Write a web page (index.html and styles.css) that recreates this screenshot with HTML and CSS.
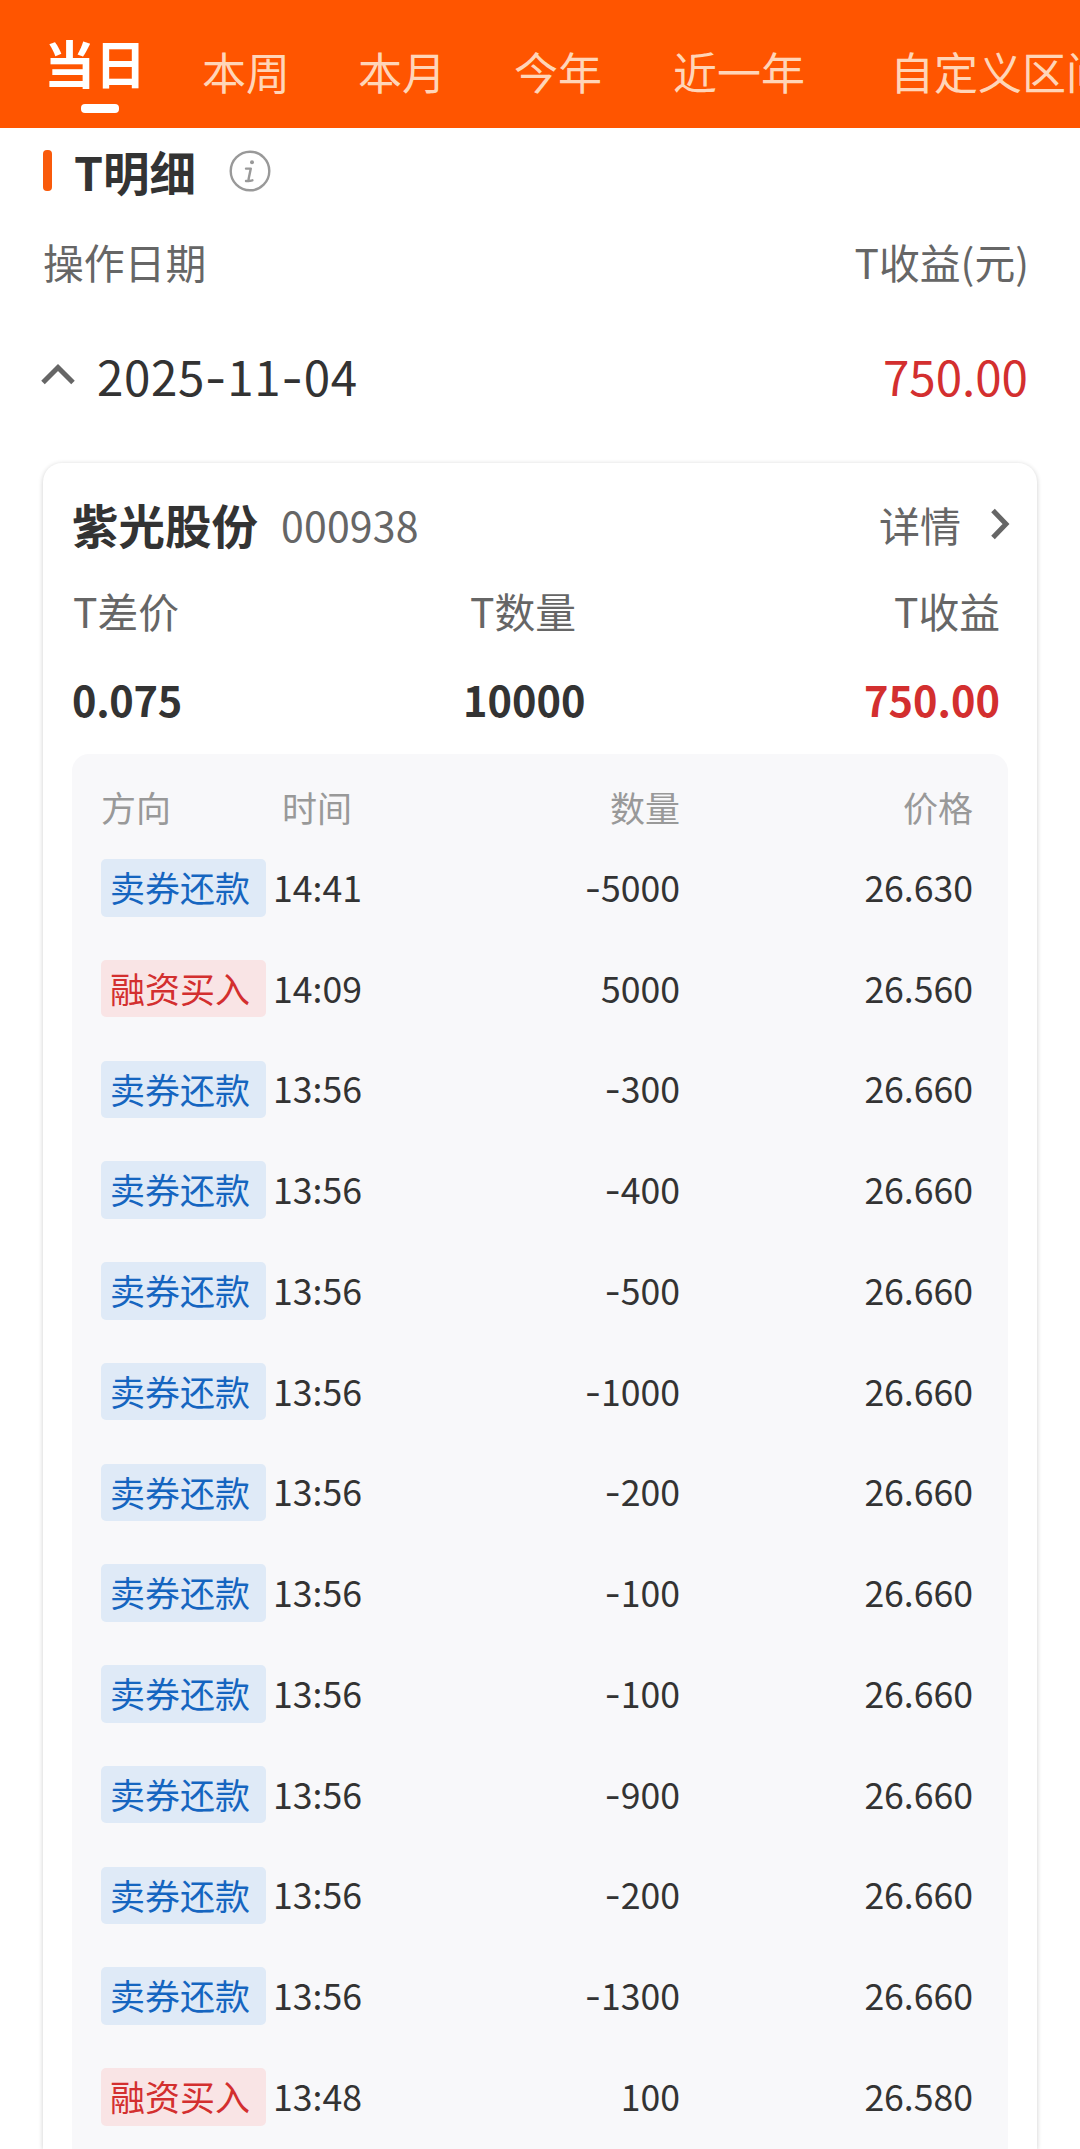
FILE: index.html
```html
<!DOCTYPE html>
<html lang="zh-CN">
<head>
<meta charset="utf-8">
<title>T明细</title>
<link rel="stylesheet" href="styles.css">
</head>
<body>
<div class="page">
  <nav class="tabs">
    <a class="tab active">当日</a>
    <a class="tab">本周</a>
    <a class="tab">本月</a>
    <a class="tab">今年</a>
    <a class="tab">近一年</a>
    <a class="tab">自定义区间</a>
  </nav>

  <header class="title">
    <span class="bar"></span>
    <h1>T明细</h1>
    <svg class="info" viewBox="0 0 42 42" fill="none" stroke="#999" stroke-width="2.4" stroke-linecap="round" stroke-linejoin="round">
      <circle cx="21" cy="21" r="19.3"/>
      <path d="M17 18.600h4.800l-2.200 10.400q-.4 2 1.600 1.800l2.200-.5M17 31h3" stroke-width="2.4"/>
      <circle cx="23" cy="12.300" r="2" fill="#999" stroke="none"/>
    </svg>
  </header>

  <div class="columns"><span>操作日期</span><span>T收益(元)</span></div>

  <div class="day">
    <svg class="up" viewBox="0 0 34 22" fill="none" stroke="#666" stroke-width="5"><path d="M2 19.500 17 4.500 32 19.500"/></svg>
    <span class="date">2025<i>-</i>11<i>-</i>04</span>
    <span class="profit">750.00</span>
  </div>

  <section class="card">
    <div class="stock">
      <h2>紫光股份</h2>
      <span class="code">000938</span>
      <a class="detail">详情</a>
      <svg class="right" viewBox="0 0 20 32" fill="none" stroke="#666" stroke-width="5"><path d="M3 2.500 16 16 3 29.500"/></svg>
    </div>
    <div class="summary labels"><span>T差价</span><span>T数量</span><span>T收益</span></div>
    <div class="summary values"><span>0.075</span><span>10000</span><span class="gain">750.00</span></div>

    <div class="trades">
      <div class="row head"><span>方向</span><span>时间</span><span>数量</span><span>价格</span></div>
      <div class="row"><b class="tag sell">卖券还款</b><span>14:41</span><span><i>-</i>5000</span><span>26.630</span></div>
      <div class="row"><b class="tag buy">融资买入</b><span>14:09</span><span>5000</span><span>26.560</span></div>
      <div class="row"><b class="tag sell">卖券还款</b><span>13:56</span><span><i>-</i>300</span><span>26.660</span></div>
      <div class="row"><b class="tag sell">卖券还款</b><span>13:56</span><span><i>-</i>400</span><span>26.660</span></div>
      <div class="row"><b class="tag sell">卖券还款</b><span>13:56</span><span><i>-</i>500</span><span>26.660</span></div>
      <div class="row"><b class="tag sell">卖券还款</b><span>13:56</span><span><i>-</i>1000</span><span>26.660</span></div>
      <div class="row"><b class="tag sell">卖券还款</b><span>13:56</span><span><i>-</i>200</span><span>26.660</span></div>
      <div class="row"><b class="tag sell">卖券还款</b><span>13:56</span><span><i>-</i>100</span><span>26.660</span></div>
      <div class="row"><b class="tag sell">卖券还款</b><span>13:56</span><span><i>-</i>100</span><span>26.660</span></div>
      <div class="row"><b class="tag sell">卖券还款</b><span>13:56</span><span><i>-</i>900</span><span>26.660</span></div>
      <div class="row"><b class="tag sell">卖券还款</b><span>13:56</span><span><i>-</i>200</span><span>26.660</span></div>
      <div class="row"><b class="tag sell">卖券还款</b><span>13:56</span><span><i>-</i>1300</span><span>26.660</span></div>
      <div class="row"><b class="tag buy">融资买入</b><span>13:48</span><span>100</span><span>26.580</span></div>
    </div>
  </section>
</div>
</body>
</html>
```
FILE: styles.css
```css
* { box-sizing: border-box; }

body {
  margin: 0;
  background: #fff;
  color: #333;
  font-family: "Noto Sans CJK SC", sans-serif;
}

h1, h2 { margin: 0; font-weight: 700; }

/* wider, raised hyphen for dates and signed numbers */
i { font-family: Inter, sans-serif; font-style: normal; line-height: 0; }

.page {
  display: flex;
  flex-direction: column;
  width: 1080px;
  height: 2149px;
  overflow: hidden;
}

.tabs {
  flex: none;
  display: grid;
  grid-template-columns: 158px 156px 156px 159px 217px 230px;
  height: 128px;
  padding-left: 44px;
  background: #ff5500;
  overflow: hidden;
}
.tab {
  padding-top: 41px;
  color: #ffd5b8;
  font-size: 44px;
  line-height: 60px;
  white-space: nowrap;
}
.tab.active {
  display: flex;
  flex-direction: column;
  gap: 12px;
  padding-top: 32px;
  color: #fff;
  font-size: 51px;
  font-weight: 700;
}
.tab.active::after {
  content: "";
  width: 38px;
  height: 9px;
  margin-left: 37px;
  border-radius: 4px;
  background: #fff;
}

.title {
  flex: none;
  display: flex;
  align-items: center;
  height: 85px;
  padding-left: 43px;
}
.bar { width: 9px; height: 41px; border-radius: 4px; background: #f95a0b; }
h1 { width: 123px; margin-left: 22px; font-size: 46.5px; line-height: 60px; white-space: nowrap; }
.info { width: 42px; height: 42px; margin-left: 32px; }

.columns {
  flex: none;
  display: flex;
  justify-content: space-between;
  height: 97px;
  padding: 0 51px 0 43px;
  color: #666;
  font-size: 40.8px;
  line-height: 98px;
}

.day {
  flex: none;
  display: flex;
  align-items: center;
  height: 132px;
  padding: 0 52px 0 41px;
  font-size: 47.5px;
  line-height: 60px;
}
.up { width: 34px; height: 22px; margin-bottom: 4px; }
.date { margin-left: 22px; letter-spacing: .6px; }
.profit { margin-left: auto; color: #d32f2f; }

.card {
  flex: 1;
  display: flex;
  flex-direction: column;
  width: 994px;
  margin: 21px 0 0 43px;
  border-radius: 19px 19px 0 0;
  box-shadow: 0 1px 5px rgba(0, 0, 0, .2);
}
.stock {
  display: flex;
  align-items: center;
  height: 121px;
  padding: 0 27px 0 29px;
  color: #666;
  font-size: 41px;
  line-height: 60px;
}
h2 { color: #333; font-size: 46.5px; }
.code { margin-left: 23px; letter-spacing: .2px; }
.detail { margin-left: auto; }
.right { width: 20px; height: 32px; margin-left: 29px; }

.summary {
  display: grid;
  grid-template-columns: 390px 120px 1fr;
  padding: 0 37px 0 30px;
}
.summary > :nth-child(2) { text-align: center; }
.summary > :nth-child(3) { text-align: right; }
.labels { height: 54px; color: #666; font-size: 40.8px; line-height: 54px; }
.values { height: 116px; padding-top: 7px; font-size: 41.5px; font-weight: 700; line-height: 109px; }
.values > :first-child { margin-left: -1px; letter-spacing: -.3px; }
.gain { color: #d32f2f; }

.trades {
  flex: 1;
  margin: 0 29px;
  padding: 25px 34px 0 29px;
  border-radius: 17px 17px 0 0;
  background: #f8f8fa;
}
.row {
  display: grid;
  grid-template-columns: 172px 131px 276px 293px;
  align-items: center;
  height: 100.75px;
  font-size: 35.6px;
  line-height: 56px;
}
.row > :nth-child(n + 2) { margin-bottom: 2px; }
.row > :nth-child(n + 3) { text-align: right; }
.head { height: 58.5px; color: #999; font-size: 35px; }
.head > :nth-child(1) { margin-bottom: 2px; }
.head > :nth-child(2) { padding-left: 9px; }
.tag {
  width: 165px;
  height: 57.5px;
  padding-left: 9px;
  border-radius: 5px;
  font-size: 35px;
  font-weight: 400;
  line-height: 55px;
}
.sell { background: #dfeaf7; color: #1565c0; }
.buy { background: #f9e4e5; color: #d32f2f; }
```
